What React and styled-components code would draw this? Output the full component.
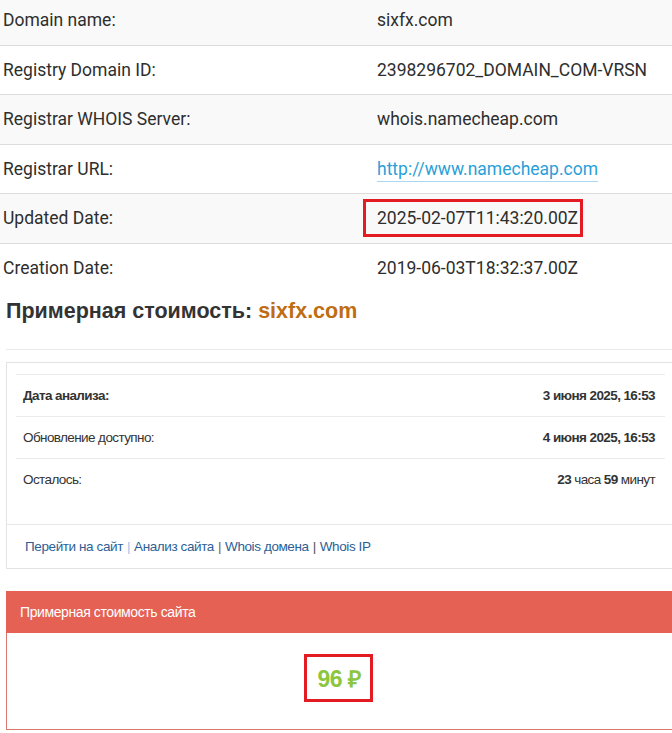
import React from "react";
import styled, { createGlobalStyle } from "styled-components";

const Global = createGlobalStyle`
  html, body { margin: 0; padding: 0; background: #fff; }
  body { overflow: hidden; width: 672px; }
`;

const Page = styled.div`
  width: 690px;
  font-family: Roboto, "Liberation Sans", Arial, sans-serif;
  color: #2e2e2e;
`;

const WhoisTable = styled.div`
  display: flex;
  flex-direction: column;
  margin-top: -4px;
`;

const WRow = styled.div`
  display: grid;
  grid-template-columns: 363px 1fr;
  align-items: center;
  height: 49.5px;
  box-sizing: border-box;
  background: ${(p) => (p.$odd ? "#f9f9f9" : "#fff")};
  border-bottom: ${(p) => (p.$last ? "none" : "1px solid #dcdcdc")};
  font-size: 17.5px;
`;

const WLabel = styled.div`
  padding-left: 3px;
`;

const WValue = styled.div`
  padding-left: 14px;
`;

const Link = styled.a`
  color: #2a9fd8;
  text-decoration: none;
  border-bottom: 1px solid #a8d9f0;
  padding-bottom: 2px;
`;

const Highlight = styled.span`
  position: relative;
  &::after {
    content: "";
    position: absolute;
    left: -14px;
    right: -5px;
    top: -9px;
    bottom: -9px;
    border: 3px solid #e31b23;
  }
`;

const Heading = styled.h2`
  margin: 0 0 0 6px;
  padding: 6px 0 25px 0;
  font-family: "Liberation Sans", Arial, sans-serif;
  font-size: 21.5px;
  font-weight: bold;
  color: #333;
  border-bottom: 1px solid #eaeaea;
`;

const Domain = styled.span`
  color: #bf6d12;
`;

const Card = styled.div`
  margin: 12px 0 0 6px;
  width: 680px;
  border: 1px solid #e3e3e3;
  box-sizing: border-box;
  font-family: "Liberation Sans", Arial, sans-serif;
  font-size: 13.5px;
  color: #333;
`;

const CardBody = styled.div`
  padding: 11px 20px 24px 9px;
`;

const InfoRow = styled.div`
  display: flex;
  justify-content: space-between;
  align-items: center;
  height: 42px;
  box-sizing: border-box;
  padding: 0 10px 0 7px;
  border-top: 1px solid #ececec;
  font-weight: ${(p) => (p.$bold ? "bold" : "normal")};
  letter-spacing: -0.6px;
`;

const B = styled.b`
  font-weight: bold;
`;

const CardFooter = styled.div`
  border-top: 1px solid #e8e8e8;
  height: 43px;
  display: flex;
  align-items: center;
  padding-left: 18px;
  letter-spacing: -0.4px;
  font-size: 13.5px;
`;

const FLink = styled.a`
  color: #2d5f95;
  text-decoration: none;
`;

const Sep = styled.span`
  color: ${(p) => p.$c};
  margin: 0 4px;
`;

const Panel = styled.div`
  margin: 22px 0 0 6px;
  width: 680px;
  font-family: "Liberation Sans", Arial, sans-serif;
`;

const PanelHead = styled.div`
  background: #e46153;
  color: #fff;
  height: 42px;
  display: flex;
  align-items: center;
  padding-left: 14px;
  font-size: 14px;
  letter-spacing: -0.4px;
`;

const PanelBody = styled.div`
  height: 97px;
  box-sizing: border-box;
  border: 1px solid #d9786c;
  border-top: none;
  display: flex;
  align-items: center;
  justify-content: center;
  padding-right: 14px;
  padding-bottom: 6px;
`;

const Price = styled.span`
  position: relative;
  color: #8cc63f;
  font-size: 23px;
  font-weight: bold;
  letter-spacing: -0.5px;
  &::after {
    content: "";
    position: absolute;
    left: -14px;
    right: -13px;
    top: -8px;
    bottom: -8px;
    border: 3px solid #e31b23;
  }
`;

const rows = [
  ["Domain name:", "sixfx.com"],
  ["Registry Domain ID:", "2398296702_DOMAIN_COM-VRSN"],
  ["Registrar WHOIS Server:", "whois.namecheap.com"],
  ["Registrar URL:", "link"],
  ["Updated Date:", "hl"],
  ["Creation Date:", "2019-06-03T18:32:37.00Z"],
];

export default function App() {
  return (
    <Page>
      <Global />
      <WhoisTable>
        {rows.map(([l, v], i) => (
          <WRow key={l} $odd={i % 2 === 0} $last={i === rows.length - 1}>
            <WLabel>{l}</WLabel>
            <WValue>
              {v === "link" ? (
                <Link href="#">http://www.namecheap.com</Link>
              ) : v === "hl" ? (
                <Highlight>2025-02-07T11:43:20.00Z</Highlight>
              ) : (
                v
              )}
            </WValue>
          </WRow>
        ))}
      </WhoisTable>
      <Heading>
        Примерная стоимость: <Domain>sixfx.com</Domain>
      </Heading>
      <Card>
        <CardBody>
          <InfoRow $bold>
            <span>Дата анализа:</span>
            <span>3 июня 2025, 16:53</span>
          </InfoRow>
          <InfoRow>
            <span>Обновление доступно:</span>
            <B>4 июня 2025, 16:53</B>
          </InfoRow>
          <InfoRow>
            <span>Осталось:</span>
            <span>
              <B>23</B> часа <B>59</B> минут
            </span>
          </InfoRow>
        </CardBody>
        <CardFooter>
          <FLink href="#">Перейти на сайт</FLink>
          <Sep $c="#9cc4e4">|</Sep>
          <FLink href="#">Анализ сайта</FLink>
          <Sep $c="#8a5a3a">|</Sep>
          <FLink href="#">Whois домена</FLink>
          <Sep $c="#555">|</Sep>
          <FLink href="#">Whois IP</FLink>
        </CardFooter>
      </Card>
      <Panel>
        <PanelHead>Примерная стоимость сайта</PanelHead>
        <PanelBody>
          <Price>96 ₽</Price>
        </PanelBody>
      </Panel>
    </Page>
  );
}
